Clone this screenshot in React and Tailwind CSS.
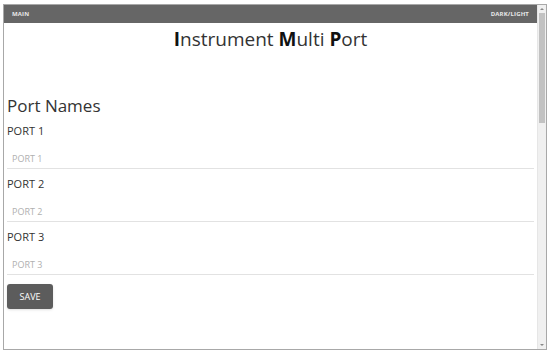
export default function App() {
  const ports = ["PORT 1", "PORT 2", "PORT 3"];
  return (
    <div className="w-[550px] h-[352px] bg-white pt-[4px] pl-[3px] pr-[3px] pb-[2px] font-['Open_Sans',sans-serif]">
      <div className="flex h-full border border-[#a8a8a8] bg-white">
        {/* page */}
        <div className="flex-1 flex flex-col overflow-hidden">
          <div className="h-[18px] bg-[#666666] flex items-center justify-between px-[8px] text-[6px] font-bold text-[#e8e8e8] tracking-wide">
            <span>MAIN</span>
            <span>DARK/LIGHT</span>
          </div>
          <h1 className="text-center text-[19px] leading-[28px] mt-[2px] text-[#333]">
            <b className="text-[#111]">I</b>nstrument <b className="text-[#111]">M</b>ulti <b className="text-[#111]">P</b>ort
          </h1>
          <div className="px-[3px] mt-[43px]">
            <h2 className="text-[17px] leading-[20px] text-[#333]">Port Names</h2>
            {ports.map((p) => (
              <div key={p}>
                <div className="text-[11px] leading-[14px] text-[#333] mt-[8px]">{p}</div>
                <input
                  placeholder={p}
                  className="block w-full h-[21px] mt-[10px] px-[5px] text-[9px] text-[#333] placeholder:text-[#b0b0b0] border-b border-[#e2e2e2] outline-none"
                />
              </div>
            ))}
            <button className="mt-[9px] w-[46px] h-[25px] bg-[#5c5c5c] rounded-[3px] text-white text-[9px] shadow-sm">
              SAVE
            </button>
          </div>
        </div>
        {/* scrollbar */}
        <div className="w-[9px] bg-[#f0f0f0] flex flex-col border-l border-[#e6e6e6]">
          <div className="h-[8px] flex items-center justify-center">
            <div className="w-0 h-0 border-l-[2px] border-r-[2px] border-b-[2px] border-l-transparent border-r-transparent border-b-[#888]" />
          </div>
          <div className="h-[110px] mx-[1px] bg-[#c2c2c2]" />
          <div className="flex-1" />
          <div className="h-[8px] flex items-center justify-center">
            <div className="w-0 h-0 border-l-[2px] border-r-[2px] border-t-[2px] border-l-transparent border-r-transparent border-t-[#888]" />
          </div>
        </div>
      </div>
    </div>
  );
}
